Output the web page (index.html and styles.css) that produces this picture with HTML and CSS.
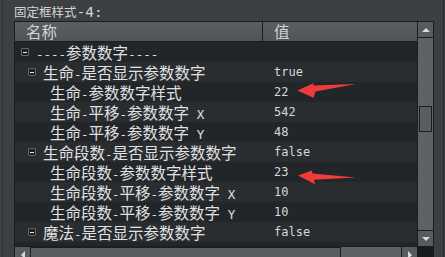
FILE: index.html
```html
<!DOCTYPE html>
<html>
<head>
<meta charset="utf-8">
<link rel="stylesheet" href="styles.css">
</head>
<body>
<div class="frame">
  <div class="title">固定框样式<span class="tl">-4:</span></div>
  <div class="tree">
    <div class="view">
      <div class="head">
        <div class="hc hname">名称</div>
        <div class="hc hval">值</div>
      </div>
      <div class="row dk">
        <div class="cn l0"><span class="exp"></span><span class="tx"><span class="lt">----</span>参数数字<span class="lt">----</span></span></div>
        <div class="cv"></div>
      </div>
      <div class="row lg">
        <div class="cn l1"><span class="exp"></span><span class="tx">生命<span class="lt">-</span>是否显示参数数字</span></div>
        <div class="cv">true</div>
      </div>
      <div class="row dk">
        <div class="cn l2"><span class="tx">生命<span class="lt">-</span>参数数字样式</span></div>
        <div class="cv">22</div>
      </div>
      <div class="row lg">
        <div class="cn l2"><span class="tx">生命<span class="lt">-</span>平移<span class="lt">-</span>参数数字<span class="lt"> X</span></span></div>
        <div class="cv">542</div>
      </div>
      <div class="row dk">
        <div class="cn l2"><span class="tx">生命<span class="lt">-</span>平移<span class="lt">-</span>参数数字<span class="lt"> Y</span></span></div>
        <div class="cv">48</div>
      </div>
      <div class="row lg">
        <div class="cn l1"><span class="exp"></span><span class="tx">生命段数<span class="lt">-</span>是否显示参数数字</span></div>
        <div class="cv">false</div>
      </div>
      <div class="row dk">
        <div class="cn l2"><span class="tx">生命段数<span class="lt">-</span>参数数字样式</span></div>
        <div class="cv">23</div>
      </div>
      <div class="row lg">
        <div class="cn l2"><span class="tx">生命段数<span class="lt">-</span>平移<span class="lt">-</span>参数数字<span class="lt"> X</span></span></div>
        <div class="cv">10</div>
      </div>
      <div class="row dk">
        <div class="cn l2"><span class="tx">生命段数<span class="lt">-</span>平移<span class="lt">-</span>参数数字<span class="lt"> Y</span></span></div>
        <div class="cv">10</div>
      </div>
      <div class="row lg">
        <div class="cn l1"><span class="exp"></span><span class="tx">魔法<span class="lt">-</span>是否显示参数数字</span></div>
        <div class="cv">false</div>
      </div>
      <div class="row dk">
        <div class="cn l2"><span class="tx"></span></div>
        <div class="cv"></div>
      </div>
    </div>
    <div class="vs">
      <div class="sbtn up"><span class="tri-up"></span></div>
      <div class="vtrack"><div class="vthumb"></div></div>
      <div class="sbtn dn"><span class="tri-dn"></span></div>
    </div>
    <div class="hs">
      <div class="hbtn lf"><span class="tri-lf"></span></div>
      <div class="hthumb"></div>
      <div class="htrack"></div>
      <div class="hbtn rt"><span class="tri-rt"></span></div>
    </div>
    <div class="corner"></div>
  </div>
</div>
<svg class="marks" width="445" height="257" viewBox="0 0 445 257">
  <polygon points="297.3,90.5 314,83 313,85.6 356,84 315.5,91.6 313.5,97.7" fill="#f03b3b"/>
  <polygon points="298,175.6 311.8,170.5 312.5,173.4 356,177.6 314,179.8 315,184.3" fill="#f03b3b"/>
</svg>
</body>
</html>
```

FILE: styles.css
```css
* { box-sizing: border-box; }
html, body { margin: 0; padding: 0; }
body {
  width: 445px;
  height: 257px;
  overflow: hidden;
  position: relative;
  background: #3c4043;
  font-family: "Noto Sans CJK SC", sans-serif;
  color: #d8d8d8;
}
.frame {
  margin-left: 2px;
  width: 442px;
  height: 257px;
  border-left: 1px solid #2e3134;
  border-right: 1px solid #2a2d30;
}
.title {
  height: 21px;
  padding: 3px 0 0 11px;
  font-size: 12.5px;
  line-height: 17px;
  color: #d2d3d4;
  white-space: nowrap;
}
.tl {
  font-family: "DejaVu Sans Mono", monospace;
  font-size: 14.5px;
  line-height: 14px;
}
.tree {
  margin-left: 11px;
  width: 420px;
  display: grid;
  grid-template-columns: 402px 17px;
  grid-template-rows: 224px 17px;
  border-top: 1px solid #1b1d1f;
  border-left: 1px solid #1b1d1f;
}
.view {
  overflow: hidden;
  background: #232629;
}
.head {
  display: flex;
  height: 20px;
  border-bottom: 1px solid #1b1d1f;
  background: linear-gradient(#5b5f62, #505457);
  color: #d0d3d5;
  font-size: 15.5px;
  line-height: 19px;
}
.hc { white-space: nowrap; padding-left: 11px; }
.hname { width: 248px; border-right: 1px solid #1b1d1f; }
.row {
  display: flex;
  height: 20px;
  line-height: 20px;
  font-size: 15.5px;
}
.row.dk { background: #232629; }
.row.lg { background: #2a2d30; }
.cn {
  width: 248px;
  flex: none;
  display: flex;
  align-items: center;
  white-space: nowrap;
  overflow: hidden;
  color: #e0e1e2;
}
.l0 { padding-left: 6px; }
.l1 { padding-left: 13px; }
.l2 { padding-left: 35px; }
.tx { line-height: 20px; }
.lt {
  font-family: "DejaVu Sans Mono", monospace;
  font-size: 12.5px;
  line-height: 12px;
  white-space: pre;
}
.cv {
  padding-left: 11px;
  font-family: "DejaVu Sans Mono", monospace;
  font-size: 12px;
  color: #d4d7da;
  white-space: nowrap;
}
.exp {
  flex: none;
  width: 8px;
  height: 8px;
  margin-right: 7px;
  border: 1px solid #65696c;
  border-radius: 1px;
  background: #1c1e20;
  display: flex;
  align-items: center;
  justify-content: center;
}
.exp::after {
  content: "";
  width: 4px;
  height: 1px;
  background: #e8e8e8;
}
.vs {
  display: flex;
  flex-direction: column;
  background: #5e6265;
  border-left: 1px solid #1b1d1f;
  border-right: 1px solid #1b1d1f;
}
.sbtn {
  height: 16px;
  flex: none;
  background: #575b5e;
  display: flex;
  align-items: center;
  justify-content: center;
}
.sbtn.up { border-bottom: 1px solid #1b1d1f; }
.sbtn.dn { border-top: 1px solid #1b1d1f; }
.tri-up {
  width: 0; height: 0;
  border-left: 4px solid transparent;
  border-right: 4px solid transparent;
  border-bottom: 4px solid #d9d9d9;
}
.tri-dn {
  width: 0; height: 0;
  border-left: 4px solid transparent;
  border-right: 4px solid transparent;
  border-top: 4px solid #d9d9d9;
}
.vtrack { flex: 1; padding: 0 1px; }
.vthumb {
  margin-top: 68px;
  height: 26px;
  border: 1px solid #1b1d1f;
  background: #5a5e61;
}
.hs {
  display: flex;
  height: 17px;
  border-top: 1px solid #1b1d1f;
  background: #5e6265;
}
.hbtn {
  width: 16px;
  flex: none;
  background: #575b5e;
  display: flex;
  align-items: center;
  justify-content: center;
}
.hbtn.lf { border-right: 1px solid #1b1d1f; }
.hbtn.rt { border-left: 1px solid #1b1d1f; }
.tri-lf {
  width: 0; height: 0;
  border-top: 4px solid transparent;
  border-bottom: 4px solid transparent;
  border-right: 4px solid #d9d9d9;
}
.tri-rt {
  width: 0; height: 0;
  border-top: 4px solid transparent;
  border-bottom: 4px solid transparent;
  border-left: 4px solid #d9d9d9;
}
.hthumb {
  width: 310px;
  flex: none;
  border: 1px solid #1b1d1f;
  border-left: none;
  background: #5a5e61;
}
.htrack { flex: 1; }
.corner { background: #1a1b1d; }
.marks {
  position: absolute;
  left: 0;
  top: 0;
  pointer-events: none;
}
```
